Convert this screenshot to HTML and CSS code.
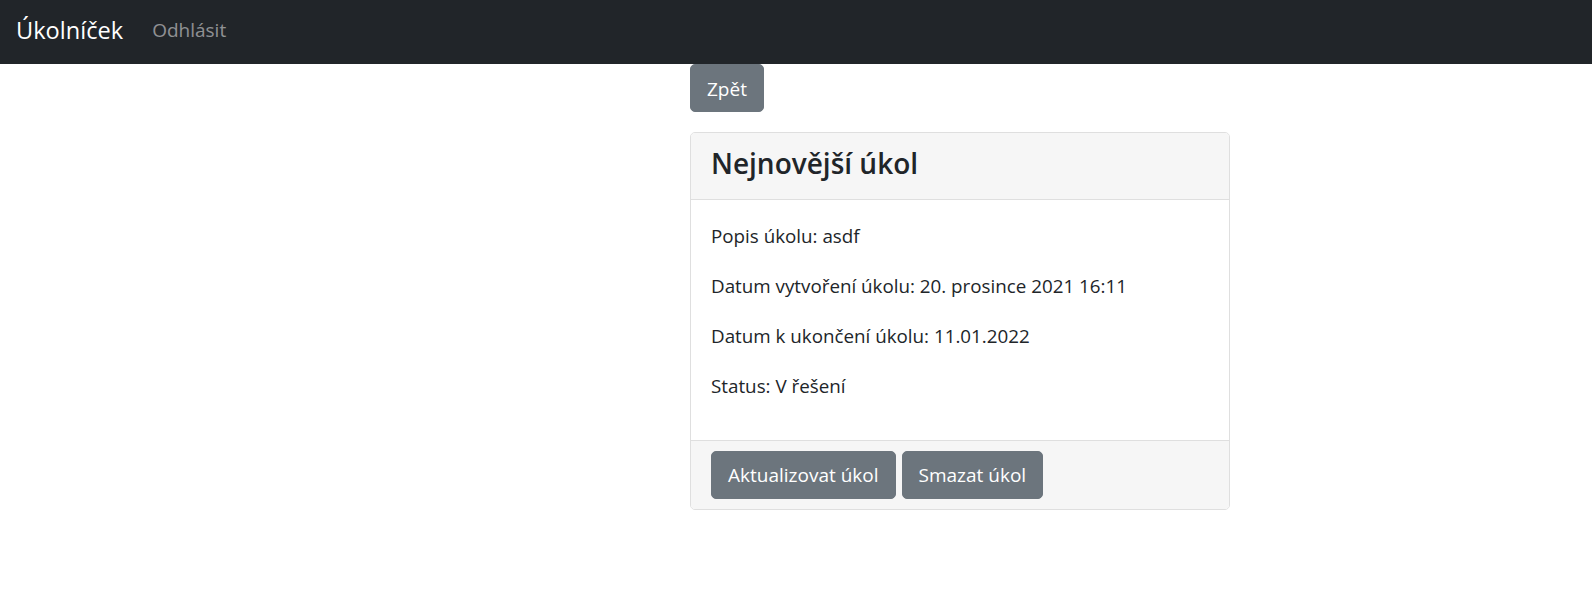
FILE: index.html
```html
<!DOCTYPE html>
<html lang="cs">
<head>
<meta charset="utf-8">
<title>Úkolníček</title>
<link rel="stylesheet" href="styles.css">
</head>
<body>
<nav class="navbar">
  <a class="brand" href="#">Úkolníček</a>
  <a class="nav-link" href="#">Odhlásit</a>
</nav>
<main class="main">
  <a class="btn" href="#">Zpět</a>
  <section class="card">
    <header class="card-header">
      <h3 class="card-title">Nejnovější úkol</h3>
    </header>
    <div class="card-body">
      <p>Popis úkolu: asdf</p>
      <p>Datum vytvoření úkolu: 20. prosince 2021 16:11</p>
      <p>Datum k ukončení úkolu: 11.01.2022</p>
      <p>Status: V řešení</p>
    </div>
    <footer class="card-footer">
      <a class="btn" href="#">Aktualizovat úkol</a>
      <a class="btn" href="#">Smazat úkol</a>
    </footer>
  </section>
</main>
</body>
</html>
```

FILE: styles.css
```css
* { box-sizing: border-box; }
html, body { margin: 0; padding: 0; }
body {
  font-family: "Open Sans", "Noto Sans", sans-serif;
  color: #212529;
  background: #fff;
  font-size: 18.8px;
}
a { text-decoration: none; }

.navbar {
  height: 64px;
  background: #212529;
  display: flex;
  align-items: center;
  padding: 0 16px 4px;
}
.brand {
  color: #fff;
  font-size: 23.6px;
  line-height: 30px;
  margin-right: 29px;
}
.nav-link {
  color: rgba(255,255,255,.5);
  font-size: 19px;
  line-height: 30px;
}

.main {
  width: 540px;
  margin-left: 690px;
  display: flex;
  flex-direction: column;
  align-items: flex-start;
}

.btn {
  display: inline-block;
  background: #6c757d;
  border: 1px solid #6c757d;
  color: #fff;
  font-size: 19px;
  line-height: 30px;
  padding: 8px 16px;
  border-radius: 5px;
}
.main > .btn {
  padding: 9px 16px 7px;
}

.card {
  align-self: stretch;
  margin-top: 20px;
  border: 1px solid #dfdfdf;
  border-radius: 5px;
  overflow: hidden;
}
.card-header {
  background: #f6f6f6;
  border-bottom: 1px solid #dfdfdf;
  padding: 12px 20px;
}
.card-title {
  margin: 0 0 6px;
  font-size: 28px;
  font-weight: 600;
  line-height: 36px;
}
.card-body {
  padding: 20px;
}
.card-body p {
  margin: 0 0 20px;
  line-height: 30px;
  position: relative;
  top: 1px;
}
.card-footer {
  background: #f6f6f6;
  border-top: 1px solid #dfdfdf;
  padding: 10px 20px;
  display: flex;
  gap: 6px;
}
```
